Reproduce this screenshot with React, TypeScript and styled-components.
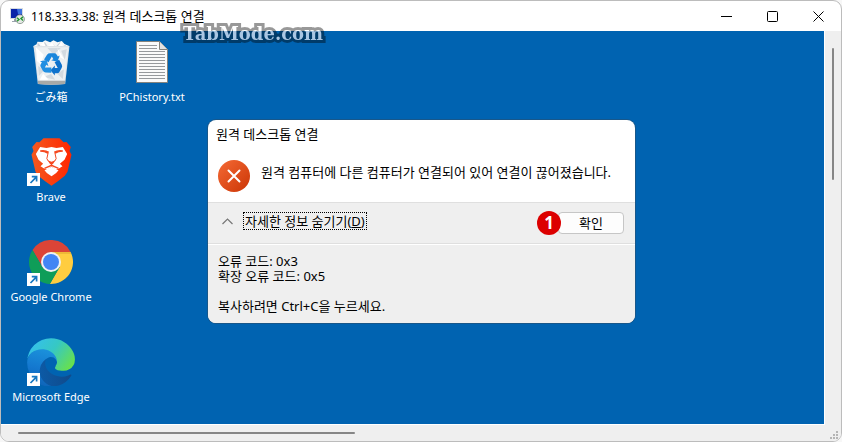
import React from "react";
import styled, { createGlobalStyle } from "styled-components";

const GlobalStyle = createGlobalStyle`
  * { box-sizing: border-box; }
  body { margin: 0; background: #f7f7f7; }
  button { font: inherit; color: inherit; padding: 0; border: 0; background: none; }
`;

const Window = styled.main`
  display: grid;
  grid-template-rows: auto 1fr 16px;
  min-height: 100vh;
  overflow: hidden;
  border: 1px solid #bcbcbc;
  border-radius: 9px;
  background: #fff;
  color: #000;
  font: 13px/16px "Noto Sans", "Noto Sans CJK KR", sans-serif;
`;

const TitleBar = styled.header`
  display: flex;
  align-items: center;
  height: 30px;
  padding-left: 8px;
`;

const WindowTitle = styled.h1`
  flex: 1;
  margin: 0 0 0 6px;
  font-size: 13px;
  font-weight: 400;
  white-space: nowrap;
`;

const Address = styled.span`
  font-size: 12px;
`;

const CaptionButton = styled.button`
  display: grid;
  place-items: center;
  width: 46px;
  height: 30px;
`;

const Body = styled.div`
  display: grid;
  grid-template-columns: 1fr 16px;
`;

const Desktop = styled.section`
  position: relative;
  padding-top: 7px;
  border: solid #fff;
  border-width: 0 1px 1px 0;
  background: #0063b1;
`;

const Watermark = styled.div`
  position: absolute;
  top: -10px;
  left: 182px;
  z-index: 0;
  font: bold 18px/26px "DejaVu Serif", serif;
`;

const WatermarkEdge = styled.span`
  position: absolute;
  inset: 0;
  z-index: -1;
  opacity: 0.4;
  color: #000;
  -webkit-text-stroke: 6px #000;
  stroke-linejoin: round;
`;

const WatermarkText = styled.span`
  display: block;
  background: linear-gradient(#fff 10px, #a9c6e3 10px);
  background-clip: text;
  color: transparent;
`;

const Shortcuts = styled.div`
  display: grid;
  grid-template-columns: 100px 102px;
  grid-auto-rows: 67px;
  row-gap: 33px;
`;

const Shortcut = styled.button<{ $column: number }>`
  display: flex;
  grid-column: ${(p) => p.$column};
  flex-direction: column;
  align-items: center;
  gap: 3px;
  color: #fff;
  font: 11px/16px "Noto Sans", "Noto Sans CJK JP", sans-serif;
  white-space: nowrap;
`;

const IconBox = styled.span`
  position: relative;
  display: grid;
  place-items: center;
  width: 48px;
  height: 48px;
`;

const LinkMark = styled.svg`
  position: absolute;
  bottom: 0;
  left: 0;
`;

const VerticalTrack = styled.div`
  display: flex;
  justify-content: center;
  padding-top: 17px;
  background: #efefef;
`;

const VerticalThumb = styled.div`
  width: 2px;
  height: 35%;
  border-radius: 1px;
  background: #868686;
`;

const BottomTrack = styled.div`
  display: flex;
  align-items: center;
  justify-content: space-between;
  padding-left: 17px;
  background: #efefef;
`;

const HorizontalThumb = styled.div`
  width: 41%;
  height: 2px;
  border-radius: 1px;
  background: #868686;
`;

const Grip = styled.svg`
  align-self: flex-end;
  margin: 0 3px 2px 0;
`;

const Dialog = styled.section`
  position: absolute;
  top: 89px;
  left: 207px;
  overflow: hidden;
  width: 427px;
  border-radius: 8px;
  background: #fff;
  box-shadow: 0 0 0 1px rgba(60, 70, 80, 0.4);
`;

const DialogTitle = styled.h2`
  margin: 0;
  padding: 6px 8px 0;
  font-size: 13px;
  font-weight: 400;
`;

const Message = styled.div`
  display: flex;
  gap: 11px;
  padding: 18px 10px 10px;

  p {
    margin: 4px 0 0;
    white-space: nowrap;
  }
`;

const Commands = styled.div`
  display: flex;
  align-items: flex-start;
  justify-content: space-between;
  height: 42px;
  padding: 9px 11px 0 14px;
  border-top: 1px solid #dfdfdf;
  border-bottom: 1px solid #dfdfdf;
  background: #efefef;
`;

const DetailsToggle = styled.button`
  display: flex;
  align-items: center;
  gap: 10px;
`;

const ToggleLabel = styled.span`
  display: block;
  padding: 0 1px;
  border: 1px dotted #000;
  line-height: 16px;
`;

const ConfirmArea = styled.div`
  position: relative;
`;

const ConfirmButton = styled.button`
  display: block;
  width: 66px;
  height: 22px;
  border: 1px solid #c6c6c6;
  border-radius: 4px;
  background: #fdfdfd;
  line-height: 18px;
`;

const StepBadge = styled.span`
  position: absolute;
  top: -1px;
  left: -21px;
  width: 24px;
  height: 24px;
  border-radius: 50%;
  background: #dc0000;
  color: #fff;
  font: bold 17px/24px "Noto Sans", sans-serif;
  text-align: center;
`;

const Details = styled.div`
  padding: 9px 10px;
  border-top: 1px solid #fff;
  background: #efefef;
`;

const DetailLine = styled.p<{ $spaced?: boolean }>`
  margin: ${(p) => (p.$spaced ? "15px" : "0")} 0 0;
  line-height: 15px;
`;

const RemoteIcon = () => (
  <svg width="16" height="16" viewBox="0 0 16 16" aria-hidden="true">
    <path d="M1 0h13v11H1z" fill="#d5dbe2" />
    <path d="M2 1h11v9H2z" fill="#0a22a8" />
    <path d="M8 1h5v5H9z" fill="#3c70df" />
    <path d="M5 11h3v2H5zM3 13h5v1H3z" fill="#9ba4ad" />
    <circle cx="11" cy="11.2" r="4.4" fill="#e4e9e4" stroke="#7d8b85" strokeWidth=".8" />
    <path d="M8 9.7l2 1.7-2 1.8M14 8.9l-2 1.7 2 1.8" fill="none" stroke="#239531" strokeWidth="1.4" />
  </svg>
);

const recycleArrow =
  "M-20-12L-12-25Q-9-29-4-29H8Q12-29 14-25L17-20 22-23 16-6-1-10 5-13 1-20-8-5Z";

const RecycleBinIcon = () => (
  <svg width="37" height="45" viewBox="0 0 110 135" aria-hidden="true">
    <path d="M1 18l9-5 3-8 15 1 8-5 15 6 10-6 12 6 13-4 8 9 14 6-4 18H5z" fill="#f5f7f8" />
    <path d="M13 7l10 12 12-13 10 15 12-12 10 12 14-16 2 16 15-7-3 12H13z" fill="#c8d1d9" />
    <path d="M20 15l12-8 7 15zM45 17l12-10 8 14zM74 19l10-13 6 15z" fill="#fff" />
    <path d="M1 18h108L96 132q-41 5-82 0z" fill="#dfe4e8" />
    <path d="M5 22h100L94 122H16z" fill="#edf0f2" />
    <path d="M7 25l24 19-20 10zM43 24l18 20 22-20zM84 32l17-4-6 31zM15 78l18 13-16 17zM72 101l20-13-3 29zM31 111l23-9 12 17z" fill="#d3dae0" />
    <path d="M8 22l24 22-9 29-12-10zM73 25l21 34-16-9zM30 101l16 18H20z" fill="#fff" />
    <path d="M14 122h82l-1 10q-40 5-80 0z" fill="#a8a9a7" />
    <g transform="translate(55 72) scale(1.12)">
      <path d={recycleArrow} fill="#1a86dc" />
      <path d={recycleArrow} fill="#0f72cc" transform="rotate(120)" />
      <path d={recycleArrow} fill="#218fe2" transform="rotate(240)" />
    </g>
  </svg>
);

const TextFileIcon = () => (
  <svg width="32" height="42" viewBox="0 0 32 42" aria-hidden="true">
    <path d="M.5.5h23l8 8v33H.5z" fill="#fafafa" stroke="#85837d" />
    <path d="M23.5.5v8h8" fill="#e2e2e2" stroke="#85837d" />
    <path d="M3 4.5h18M3 7.5h18M3 10.5h26M3 13.5h26M3 16.5h26M3 19.5h26M3 22.5h26M3 25.5h26M3 28.5h26M3 31.5h26M3 34.5h26M3 37.5h26" stroke="#96999c" />
  </svg>
);

const BraveIcon = () => (
  <svg width="41" height="48" viewBox="0 0 122 144" aria-hidden="true">
    <defs>
      <linearGradient id="brave" x2="1" y2="0">
        <stop stopColor="#f4591f" />
        <stop offset="1" stopColor="#ff2600" />
      </linearGradient>
    </defs>
    <path d="M37 1h48l12 12 9-1 13 15-4 12 6 11-12 51-8 12q-19 16-40 30-21-14-40-30l-8-12L1 50l6-11-4-12 13-15 9 1z" fill="url(#brave)" />
    <path d="M14 48l13-21 19 3 15-3 15 3 19-3 13 21-8 17-14 12 8 8-12 7-10 2-11-9-11 9-10-2-12-7 8-8-14-12z" fill="#fff" />
    <path d="M27 37q15-3 27 4l-5 6q-8-6-22-6zM95 37q-15-3-27 4l5 6q8-6 22-6z" fill="#f5481f" />
    <path d="M51 44l-4 18 5 8M71 44l4 18-5 8" fill="none" stroke="#f5481f" strokeWidth="3" />
    <path d="M49 67l12 4 12-4-7 10-5 3-5-3z" fill="#f5481f" />
    <path d="M61 78v6M40 91l21-9 21 9" fill="none" stroke="#f5481f" strokeWidth="4" />
    <path d="M40 97l21-11 21 11-7 8-14 10-14-10z" fill="#fff" />
  </svg>
);

const ChromeIcon = () => (
  <svg width="44" height="44" viewBox="0 0 132 132" aria-hidden="true">
    <path d="M10.6 30.1A66 66 0 0 1 124.8 36H66L40 81z" fill="#db4437" />
    <path d="M124.8 36A66 66 0 0 1 62.6 131.9L92 81 66 36z" fill="#ffcd40" />
    <path d="M62.6 131.9A66 66 0 0 1 10.6 30.1L40 81h52z" fill="#0f9d58" />
    <path d="M66 36h58.8l2 6H70z" fill="#c48b23" opacity=".3" />
    <circle cx="66" cy="66" r="30" fill="#f1f1f1" />
    <circle cx="66" cy="66" r="24" fill="#4285f4" />
  </svg>
);

const EdgeIcon = () => (
  <svg width="48" height="48" viewBox="4 0 257 256" aria-hidden="true">
    <defs>
      <linearGradient id="edgeBase" x1="0" x2="1">
        <stop stopColor="#0c5ba7" />
        <stop offset="1" stopColor="#104a8b" />
      </linearGradient>
      <linearGradient id="edgeBody" x1=".6" y1="0" x2=".4" y2="1">
        <stop stopColor="#1b93dc" />
        <stop offset=".55" stopColor="#1478cf" />
        <stop offset="1" stopColor="#0e63b6" />
      </linearGradient>
      <linearGradient id="edgeWave" x1="0" y1=".2" x2="1" y2=".7">
        <stop stopColor="#35bff0" />
        <stop offset=".5" stopColor="#36c8c4" />
        <stop offset="1" stopColor="#68e04d" />
      </linearGradient>
    </defs>
    <path fill="url(#edgeBase)" d="M235.68 195.46a93.73 93.73 0 0 1-10.54 4.71 101.87 101.87 0 0 1-35.9 6.46c-47.32 0-88.54-32.55-88.54-74.32a31.48 31.48 0 0 1 16.43-27.31c-42.8 1.8-53.8 46.4-53.8 72.53 0 73.88 68.09 81.37 82.76 81.37 7.91 0 19.84-2.3 27-4.56l1.31-.44a128.34 128.34 0 0 0 66.6-52.8 4 4 0 0 0-5.32-5.64Z" />
    <path fill="url(#edgeBody)" d="M110.34 246.34A79.2 79.2 0 0 1 87.6 225a80.72 80.72 0 0 1 29.53-120c3.12-1.47 8.45-4.13 15.54-4a32.35 32.35 0 0 1 25.69 13 31.88 31.88 0 0 1 6.36 18.66c0-.21 24.46-79.6-80-79.6-43.9 0-80 41.66-80 78.21a130.15 130.15 0 0 0 12.11 56 128 128 0 0 0 156.38 67.11 75.55 75.55 0 0 1-62.78-8Z" />
    <path fill="url(#edgeWave)" d="M156.94 153.78c-.81 1.05-3.3 2.5-3.3 5.66 0 2.61 1.7 5.12 4.72 7.23 14.38 10 41.49 8.68 41.56 8.68a59.56 59.56 0 0 0 30.27-8.35 61.38 61.38 0 0 0 30.43-52.88c.26-22.41-8-37.31-11.34-43.91C228.09 28.76 182.35.25 132.61.25a128 128 0 0 0-128 126.2c.48-36.54 36.8-66.05 80-66.05 3.5 0 23.46.34 42 10.07 16.34 8.58 24.9 18.94 30.85 29.21 6.18 10.67 7.28 24.15 7.28 29.52s-2.74 13.33-7.8 19.88Z" />
  </svg>
);

const ErrorIcon = () => (
  <svg width="32" height="32" viewBox="0 0 32 32" aria-hidden="true">
    <defs>
      <linearGradient id="error" x2="1" y2="1">
        <stop stopColor="#f56a35" />
        <stop offset="1" stopColor="#cb3505" />
      </linearGradient>
    </defs>
    <circle cx="16" cy="16" r="16" fill="url(#error)" />
    <path d="M10.5 10.5l11 11M21.5 10.5l-11 11" stroke="#fff" strokeWidth="2" strokeLinecap="round" />
  </svg>
);

const shortcuts = [
  { label: "ごみ箱", icon: <RecycleBinIcon />, column: 1, linked: false },
  { label: "PChistory.txt", icon: <TextFileIcon />, column: 2, linked: false },
  { label: "Brave", icon: <BraveIcon />, column: 1, linked: true },
  { label: "Google Chrome", icon: <ChromeIcon />, column: 1, linked: true },
  { label: "Microsoft Edge", icon: <EdgeIcon />, column: 1, linked: true },
];

export default function App() {
  return (
    <>
      <GlobalStyle />
      <Window>
        <TitleBar>
          <RemoteIcon />
          <WindowTitle>
            <Address>118.33.3.38:</Address> 원격 데스크톱 연결
          </WindowTitle>
          <CaptionButton aria-label="최소화">
            <svg width="11" height="11"><path d="M0 5.5h11" stroke="#000" /></svg>
          </CaptionButton>
          <CaptionButton aria-label="최대화">
            <svg width="11" height="11"><rect x=".5" y=".5" width="10" height="10" rx="1" fill="none" stroke="#000" /></svg>
          </CaptionButton>
          <CaptionButton aria-label="닫기">
            <svg width="11" height="11"><path d="M.5.5l10 10M10.5.5l-10 10" stroke="#000" /></svg>
          </CaptionButton>
        </TitleBar>
        <Body>
          <Desktop>
            <Shortcuts>
              {shortcuts.map((s) => (
                <Shortcut key={s.label} $column={s.column}>
                  <IconBox>
                    {s.icon}
                    {s.linked && (
                      <LinkMark width="13" height="13" viewBox="0 0 13 13" aria-hidden="true">
                        <path d="M0 0h13v13H0z" fill="#fff" />
                        <path d="M3.5 10L9 4.3M4.8 3.7h4.8v4.9" fill="none" stroke="#1678c2" strokeWidth="1.7" />
                      </LinkMark>
                    )}
                  </IconBox>
                  {s.label}
                </Shortcut>
              ))}
            </Shortcuts>
            <Watermark>
              <WatermarkEdge aria-hidden="true">TabMode.com</WatermarkEdge>
              <WatermarkText>TabMode.com</WatermarkText>
            </Watermark>
            <Dialog role="dialog" aria-labelledby="dialog-title">
              <DialogTitle id="dialog-title">원격 데스크톱 연결</DialogTitle>
              <Message>
                <ErrorIcon />
                <p>원격 컴퓨터에 다른 컴퓨터가 연결되어 있어 연결이 끊어졌습니다.</p>
              </Message>
              <Commands>
                <DetailsToggle aria-expanded="true">
                  <svg width="11" height="7" aria-hidden="true">
                    <path d="M.5 6l5-5 5 5" fill="none" stroke="#777" strokeWidth="1.2" />
                  </svg>
                  <ToggleLabel>자세한 정보 숨기기(<u>D</u>)</ToggleLabel>
                </DetailsToggle>
                <ConfirmArea>
                  <ConfirmButton>확인</ConfirmButton>
                  <StepBadge>1</StepBadge>
                </ConfirmArea>
              </Commands>
              <Details>
                <DetailLine>오류 코드: 0x3</DetailLine>
                <DetailLine>확장 오류 코드: 0x5</DetailLine>
                <DetailLine $spaced>복사하려면 Ctrl+C을 누르세요.</DetailLine>
              </Details>
            </Dialog>
          </Desktop>
          <VerticalTrack><VerticalThumb /></VerticalTrack>
        </Body>
        <BottomTrack>
          <HorizontalThumb />
          <Grip width="8" height="8" aria-hidden="true">
            <path d="M6 0h2v2H6zM3 3h2v2H3zM6 3h2v2H6zM0 6h2v2H0zM3 6h2v2H3zM6 6h2v2H6z" fill="#b5b5b5" />
          </Grip>
        </BottomTrack>
      </Window>
    </>
  );
}
